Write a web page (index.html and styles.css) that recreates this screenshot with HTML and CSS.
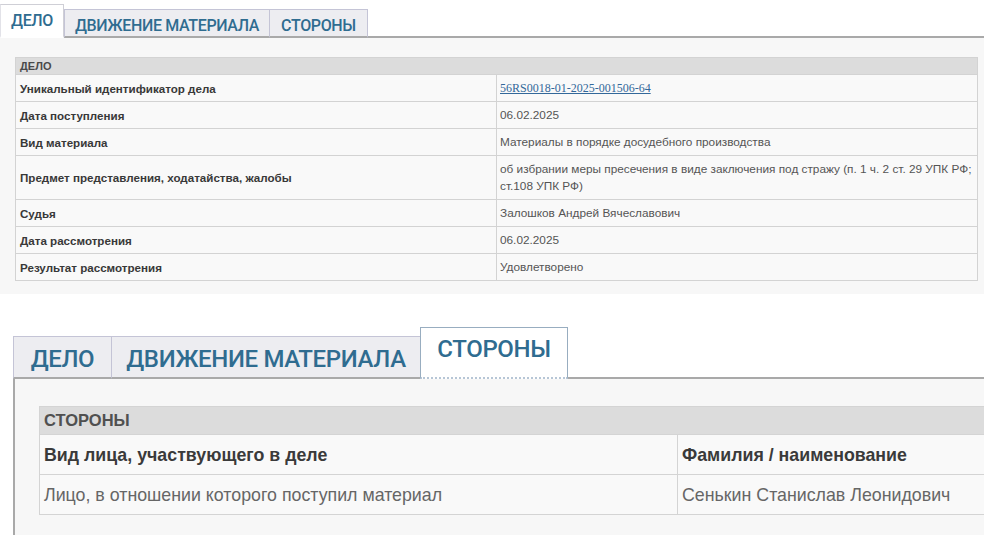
FILE: index.html
```html
<!DOCTYPE html>
<html lang="ru">
<head>
<meta charset="utf-8">
<title>Дело</title>
<link rel="stylesheet" href="styles.css">
</head>
<body>
<section class="shot shot-top">
  <div class="tabs">
    <div class="tab active">ДЕЛО</div>
    <div class="tab">ДВИЖЕНИЕ МАТЕРИАЛА</div>
    <div class="tab">СТОРОНЫ</div>
    <div class="tab-fill"></div>
  </div>
  <div class="panel">
    <table class="info">
      <colgroup><col class="col-label"><col></colgroup>
      <tr class="head"><td colspan="2">ДЕЛО</td></tr>
      <tr><td class="label">Уникальный идентификатор дела</td><td class="value"><a href="#" class="uid">56RS0018-01-2025-001506-64</a></td></tr>
      <tr><td class="label">Дата поступления</td><td class="value">06.02.2025</td></tr>
      <tr><td class="label">Вид материала</td><td class="value">Материалы в порядке досудебного производства</td></tr>
      <tr class="tall"><td class="label">Предмет представления, ходатайства, жалобы</td><td class="value">об избрании меры пресечения в виде заключения под стражу (п. 1 ч. 2 ст. 29 УПК РФ; ст.108 УПК РФ)</td></tr>
      <tr><td class="label">Судья</td><td class="value">Залошков Андрей Вячеславович</td></tr>
      <tr><td class="label">Дата рассмотрения</td><td class="value">06.02.2025</td></tr>
      <tr><td class="label">Результат рассмотрения</td><td class="value">Удовлетворено</td></tr>
    </table>
  </div>
</section>

<section class="shot shot-bottom">
  <div class="tabs">
    <div class="tab">ДЕЛО</div>
    <div class="tab">ДВИЖЕНИЕ МАТЕРИАЛА</div>
    <div class="tab active">СТОРОНЫ</div>
    <div class="tab-fill"></div>
  </div>
  <div class="panel">
    <table class="info parties">
      <colgroup><col class="col-kind"><col></colgroup>
      <tr class="head"><td colspan="2">СТОРОНЫ</td></tr>
      <tr class="cols"><td>Вид лица, участвующего в деле</td><td>Фамилия / наименование</td></tr>
      <tr><td>Лицо, в отношении которого поступил материал</td><td>Сенькин Станислав Леонидович</td></tr>
    </table>
  </div>
</section>
</body>
</html>
```

FILE: styles.css
```css
html, body {
  margin: 0;
  padding: 0;
  background: #ffffff;
  overflow: hidden;
  width: 984px;
  height: 535px;
}

body {
  font-family: "Liberation Sans", Arial, sans-serif;
}

.shot {
  overflow: hidden;
}

/* ---------- tabs ---------- */
.tabs {
  display: flex;
  align-items: flex-end;
}

.tab {
  display: flex;
  align-items: center;
  justify-content: center;
  box-sizing: border-box;
  font-family: "Roboto", "Liberation Sans", sans-serif;
  font-weight: 500;
  color: #2f6c90;
  background: #ededf1;
  border: 1px solid #c4c4d6;
  border-bottom: 2px solid #a9a9a9;
  border-right: none;
  white-space: nowrap;
}

.tab.active {
  background: #ffffff;
  border: 1px solid #cfcfd6;
  border-bottom: 2px solid #ffffff;
}

.tab-fill {
  flex: 1;
  border-bottom: 2px solid #a9a9a9;
}

/* top screenshot */
.shot-top .tabs {
  height: 38px;
}

.shot-top .tab {
  height: 29px;
  font-size: 16px;
  letter-spacing: -0.35px;
  padding: 4px 0 0;
}

.shot-top .tab:nth-child(2) {
  width: 205px;
}

.shot-top .tab:nth-child(3) {
  width: 99px;
  border-right: 1px solid #c4c4d6;
}

.shot-top .tab.active {
  width: 64px;
  height: 34px;
  padding: 0;
  border-left-color: #e2e2e8;
}

.shot-top .panel {
  background: #f7f7f7;
  padding: 19px 6px 13px 15px;
}

/* ---------- info table ---------- */
.info {
  border-collapse: collapse;
  width: 963px;
  table-layout: fixed;
}

.col-label {
  width: 481px;
}

.info td {
  border: 1px solid #d3d3d3;
  background: #f9f9f9;
  padding: 0 2px 0 3px;
  height: 26px;
  font-size: 11.8px;
  line-height: 17px;
  color: #555555;
  vertical-align: middle;
}

.info .head td {
  background: #dcdcdc;
  height: 16px;
  line-height: 16px;
  font-size: 11px;
  font-weight: bold;
  color: #4a4a4a;
  padding: 0 4px;
}

.info td.label {
  font-size: 11.6px;
  font-weight: bold;
  color: #383838;
  padding-left: 4px;
}

.info .tall td {
  height: 43px;
  padding-top: 0;
  padding-bottom: 0;
}

.uid {
  font-family: "Liberation Serif", "Times New Roman", serif;
  font-size: 12px;
  color: #33689a;
  text-decoration: underline;
}

/* bottom screenshot */
.shot-bottom {
  margin-top: 33px;
}

.shot-bottom .tabs {
  height: 52px;
  padding-left: 13px;
}

.shot-bottom .tab {
  height: 43px;
  font-size: 24px;
  letter-spacing: -0.35px;
  padding: 3px 0 0;
}

.shot-bottom .tab:nth-child(1) {
  width: 98px;
}

.shot-bottom .tab:nth-child(2) {
  width: 309px;
}

.shot-bottom .tab.active {
  width: 148px;
  height: 52px;
  padding: 0 0 8px;
  border: 1px solid #98adc0;
  border-bottom: 2px dotted #b7c6d6;
}

.shot-bottom .panel {
  margin-left: 13px;
  background: #f7f7f7;
  border-left: 2px solid #a9a9a9;
  padding: 27px 0 40px 24px;
}

.parties {
  width: 1000px;
}

.col-kind {
  width: 638px;
}

.parties td {
  height: 39px;
  font-size: 17.8px;
  line-height: 22px;
  padding: 0 5px 0 4px;
  color: #666666;
  border-color: #d4d4d4;
}

.parties .head td {
  height: 27px;
  line-height: 27px;
  font-size: 16.5px;
  color: #505050;
  padding: 0 4px;
}

.parties .cols td {
  font-weight: bold;
  color: #3a3a3a;
}
```
